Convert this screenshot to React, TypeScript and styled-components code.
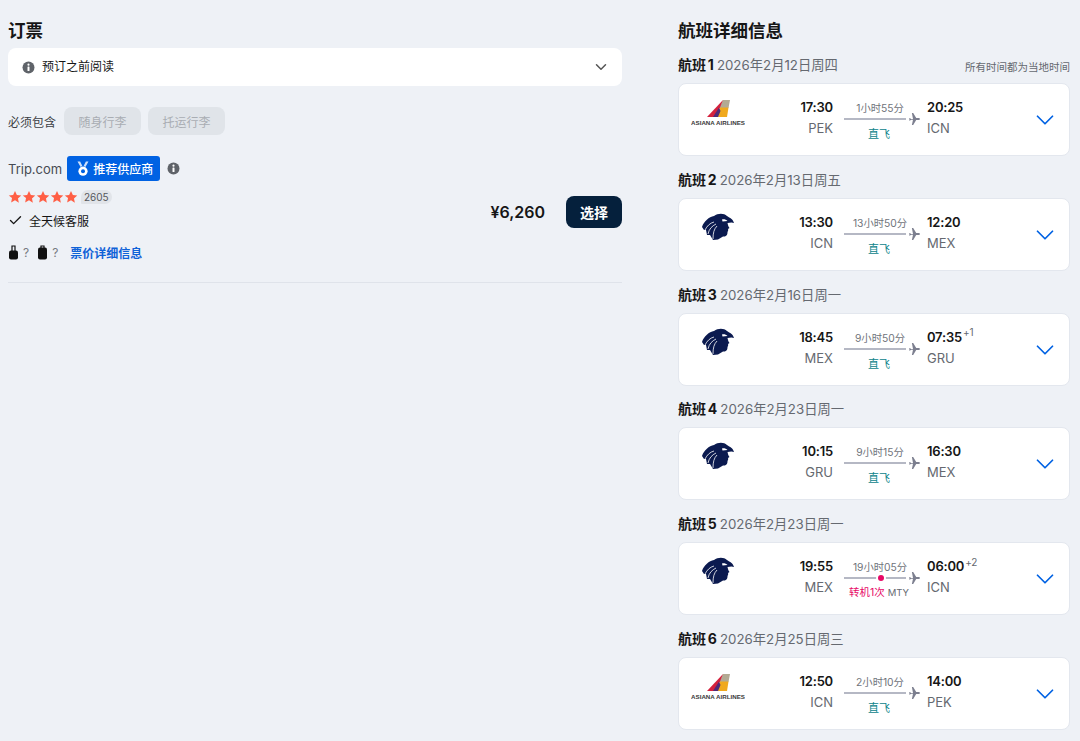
import React from "react";
import styled, { createGlobalStyle } from "styled-components";
import { ChevronDown, Check } from "lucide-react";

const GlobalStyle = createGlobalStyle`
  html, body {
    margin: 0;
    padding: 0;
    height: 741px;
    overflow: hidden;
    background: #eef1f6;
    font-family: Inter, "Noto Sans CJK SC", sans-serif;
    color: #161616;
  }
`;

const Page = styled.div`
  display: grid;
  grid-template-columns: 614px 392px;
  column-gap: 56px;
  padding: 20px 0 0 8px;
`;

const Title = styled.h2`
  margin: 0;
  height: 28px;
  font-size: 17.5px;
  line-height: 22px;
  font-weight: 700;
  color: #161616;
`;

const LeftColumn = styled.div`
  display: flex;
  flex-direction: column;
`;

const Notice = styled.div`
  display: flex;
  align-items: center;
  height: 38px;
  padding: 0 12px 0 14px;
  background: #fff;
  border-radius: 8px;
  font-size: 12px;
  line-height: 38px;
  color: #161616;
`;

const NoticeText = styled.span`
  flex: 1;
  margin-left: 7px;
`;

const Includes = styled.div`
  display: flex;
  align-items: center;
  gap: 8px;
  margin-top: 21px;
  font-size: 12px;
  color: #3c3f45;
`;

const Chip = styled.span`
  display: flex;
  align-items: center;
  justify-content: center;
  width: 77px;
  height: 28px;
  border-radius: 8px;
  background: #e0e4e9;
  color: #a9adb3;
  font-size: 12px;

  & + & {
    margin-left: -1px;
  }
`;

const Offer = styled.div`
  display: flex;
  align-items: center;
  justify-content: space-between;
  margin-top: 21px;
  padding-bottom: 20px;
  border-bottom: 1px solid #dfe3ea;
`;

const OfferInfo = styled.div`
  display: flex;
  flex-direction: column;
`;

const ProviderRow = styled.div`
  display: flex;
  align-items: center;
  height: 25px;
  font-size: 13px;
  color: #474b52;
`;

const Badge = styled.span`
  display: flex;
  align-items: center;
  gap: 3px;
  height: 25px;
  margin: 0 7px 0 5px;
  padding: 0 7px 0 9px;
  border-radius: 3px;
  background: #0062e3;
  color: #fff;
  font-size: 12px;
  font-weight: 500;
`;

const RatingRow = styled.div`
  display: flex;
  align-items: center;
  height: 20px;
  margin-top: 6px;
`;

const Stars = styled.div`
  display: flex;
  gap: 0;
  margin-right: 3px;
`;

const ReviewCount = styled.span`
  height: 14px;
  padding: 0 3px;
  line-height: 14px;
  border-radius: 7px 7px 7px 1px;
  background: #e1e4e9;
  font-size: 10px;
  color: #54575c;
`;

const ServiceRow = styled.div`
  display: flex;
  align-items: center;
  gap: 6px;
  height: 20px;
  margin-top: 3px;
  font-size: 12px;
  color: #161616;
`;

const BagRow = styled.div`
  display: flex;
  align-items: center;
  height: 20px;
  margin-top: 12px;
  font-size: 12px;
  color: #777b82;
`;

const BagMark = styled.span`
  margin: 0 8px 0 4px;
`;

const FareLink = styled.span`
  margin-left: 4px;
  font-size: 12px;
  font-weight: 700;
  color: #0f62d8;
`;

const PriceBox = styled.div`
  display: flex;
  align-items: center;
  gap: 21px;
  margin-top: 5px;
`;

const Price = styled.span`
  font-size: 16px;
  font-weight: 600;
  color: #161616;
`;

const SelectButton = styled.button`
  width: 56px;
  height: 32px;
  padding: 0;
  border: 0;
  border-radius: 8px;
  background: #05203c;
  color: #fff;
  font: 700 14px Inter, "Noto Sans CJK SC", sans-serif;
`;

const RightColumn = styled.div`
  display: flex;
  flex-direction: column;
`;

const Leg = styled.section`
  height: 114.75px;
`;

const LegHead = styled.div`
  display: flex;
  align-items: flex-end;
  justify-content: space-between;
  height: 35px;
  padding-bottom: 8px;
  box-sizing: border-box;
`;

const LegTitle = styled.div`
  font-size: 13.3px;
  line-height: 20px;
  color: #656970;
`;

const LegNumber = styled.strong`
  font-size: 14px;
  font-weight: 700;
  word-spacing: -1.5px;
  color: #161616;
  margin-right: 3px;
`;

const LocalNote = styled.span`
  font-size: 10.5px;
  line-height: 14px;
  color: #656970;
`;

const Card = styled.div`
  display: grid;
  grid-template-columns: 78px 76px 94px 1fr 48px;
  align-items: start;
  box-sizing: border-box;
  height: 73px;
  padding-top: 14px;
  background: #fff;
  border: 1px solid #e3e7ee;
  border-radius: 8px;
`;

const LogoBox = styled.div`
  display: flex;
  justify-content: center;
`;

const DepartCol = styled.div`
  display: flex;
  flex-direction: column;
  align-items: flex-end;
`;

const ArriveCol = styled.div`
  display: flex;
  flex-direction: column;
  align-items: flex-start;
`;

const Time = styled.span`
  font-size: 13px;
  line-height: 19px;
  font-weight: 600;
  letter-spacing: -0.2px;
  color: #161616;
`;

const DayOffset = styled.sup`
  margin-left: 1px;
  font-size: 10px;
  font-weight: 400;
  line-height: 0;
  color: #656970;
`;

const Airport = styled.span`
  margin-top: 2px;
  font-size: 13px;
  line-height: 18px;
  color: #656970;
`;

const RouteCol = styled.div`
  display: flex;
  flex-direction: column;
  align-items: center;
  width: 76px;
  margin-left: 11px;
`;

const Duration = styled.span`
  height: 16px;
  margin-top: 2px;
  padding-right: 4px;
  font-size: 10.3px;
  line-height: 16px;
  color: #6f737a;
`;

const LineRow = styled.div`
  display: flex;
  align-items: center;
  align-self: stretch;
  gap: 3px;
  height: 12px;
  margin-top: -3px;
`;

const Line = styled.div`
  position: relative;
  flex: 1;
  height: 2px;
  background: #b5b8c4;
`;

const StopDot = styled.span`
  position: absolute;
  left: 60%;
  top: -2px;
  width: 6px;
  height: 6px;
  margin-left: -3px;
  border-radius: 50%;
  background: #e70866;
  box-shadow: 0 0 0 2px #fff;
`;

const StopInfo = styled.span<{ $stop?: boolean }>`
  height: 16px;
  margin-top: 1px;
  padding-right: 6px;
  font-size: ${(p) => (p.$stop ? "10.5px" : "11px")};
  line-height: 16px;
  white-space: nowrap;
  color: ${(p) => (p.$stop ? "#e70866" : "#0c838a")};
`;

const StopPlace = styled.span`
  margin-left: 3px;
  font-size: 9.5px;
  color: #656970;
`;

const ChevronBox = styled.div`
  display: flex;
  justify-content: center;
  padding-top: 7px;
  color: #0062e3;
`;

const InfoDot = ({ size = 13, fill = "#5f6369" }: { size?: number; fill?: string }) => (
  <svg width={size} height={size} viewBox="0 0 13 13">
    <circle cx="6.5" cy="6.5" r="6" fill={fill} />
    <rect x="5.5" y="5.5" width="2" height="4.5" rx=".6" fill="#fff" />
    <circle cx="6.5" cy="3.7" r="1.1" fill="#fff" />
  </svg>
);

const Star = () => (
  <svg width="14" height="14" viewBox="0 0 24 24" fill="#ff5f45">
    <path d="M12 1.500l3.200 6.900 7.500.9-5.600 5.100 1.500 7.500L12 17.700l-6.600 3.700 1.500-7.500L1.300 9.300l7.500-.9z" />
  </svg>
);

const Medal = () => (
  <svg width="14" height="16" viewBox="0 0 14 16" fill="#fff">
    <path d="M1.500 0.500h2.600l2.200 4.200-1.700 1.400zM12.500 0.500H9.900L7.700 4.700l1.700 1.400z" opacity=".8" />
    <circle cx="7" cy="10.200" r="4.600" />
    <circle cx="7" cy="10.200" r="2" fill="#0062e3" />
  </svg>
);

const CabinBag = () => (
  <svg width="11" height="15" viewBox="0 0 11 15" fill="#111">
    <path d="M4 6V1h3v5" fill="none" stroke="#111" strokeWidth="1.200" />
    <rect x="1" y="5.500" width="9" height="9" rx="2" />
  </svg>
);

const CheckedBag = () => (
  <svg width="11" height="15" viewBox="0 0 11 15" fill="#111">
    <path d="M4 3V1h3v2" fill="none" stroke="#111" strokeWidth="1.200" />
    <rect x="1" y="2.500" width="9" height="12" rx="2" />
  </svg>
);

const PlaneIcon = () => (
  <svg width="11" height="12" viewBox="0 0 11 12" fill="#7c7f8f">
    <path d="M0 5.200h1.100l1 .8H4L2.900 0h1.300l3 5h2.300c1.900 0 1.900 2 0 2H7.200l-3 5H2.900L4 6.800H2.100l-1 .8H0L.5 6.400z" />
  </svg>
);

const AsianaLogo = () => (
  <svg width="54" height="30" viewBox="0 1 54 30">
    <path d="M32 3h7l-1.500 8H28z" fill="#b3aa93" />
    <path d="M29 10.500h8.500L36 20H25z" fill="#f0a91e" />
    <path d="M16 20L32 3l-3 7.500L23 20z" fill="#d4213d" />
    <path d="M22 20l6-9.500 1.500 3.500L27 20z" fill="#4d2a78" />
    <text x="27" y="28" textAnchor="middle" fontFamily="'Liberation Sans', sans-serif" fontSize="6.200" fontWeight="700" fill="#3a3a3a">
      ASIANA AIRLINES
    </text>
  </svg>
);

const AeromexicoLogo = () => (
  <svg width="34" height="27" viewBox="0 0 34 27">
    <path
      fill="#0b1a4f"
      d="M1 14C3 8 8 4 13 3c4-3 10-3 13 0 3 2 6 3 7 7-2-1-4-.5-6.500 0 .5 2 .5 3 2 5l-1.500 1c.5 1 0 2-.5 3 0 2-.5 5-4.500 4.500L17 26.500l-5 .5-3-5H6l-1-5H3z"
    />
    <path
      fill="none"
      stroke="#fff"
      strokeWidth="0.800"
      d="M13 9c-4 1-7 4-9 8M15 11c-4 2-7 5-8 10M16 13c-3 3-4 7-4 13"
    />
    <path fill="#fff" d="M21 6.500c2-.5 4 0 5.500 1.500l-5 .5z" />
  </svg>
);

type Flight = {
  num: number;
  date: string;
  airline: "asiana" | "aeromexico";
  dep: string;
  from: string;
  duration: string;
  arr: string;
  to: string;
  offset?: string;
  stop?: string;
};

const flights: Flight[] = [
  { num: 1, date: "2026年2月12日周四", airline: "asiana", dep: "17:30", from: "PEK", duration: "1小时55分", arr: "20:25", to: "ICN" },
  { num: 2, date: "2026年2月13日周五", airline: "aeromexico", dep: "13:30", from: "ICN", duration: "13小时50分", arr: "12:20", to: "MEX" },
  { num: 3, date: "2026年2月16日周一", airline: "aeromexico", dep: "18:45", from: "MEX", duration: "9小时50分", arr: "07:35", to: "GRU", offset: "+1" },
  { num: 4, date: "2026年2月23日周一", airline: "aeromexico", dep: "10:15", from: "GRU", duration: "9小时15分", arr: "16:30", to: "MEX" },
  { num: 5, date: "2026年2月23日周一", airline: "aeromexico", dep: "19:55", from: "MEX", duration: "19小时05分", arr: "06:00", to: "ICN", offset: "+2", stop: "MTY" },
  { num: 6, date: "2026年2月25日周三", airline: "asiana", dep: "12:50", from: "ICN", duration: "2小时10分", arr: "14:00", to: "PEK" },
];

const App: React.FC = () => {
  return (
    <Page>
      <GlobalStyle />
      <LeftColumn>
        <Title>订票</Title>
        <Notice>
          <InfoDot />
          <NoticeText>预订之前阅读</NoticeText>
          <ChevronDown size={18} color="#555" strokeWidth={2} />
        </Notice>
        <Includes>
          必须包含
          <Chip>随身行李</Chip>
          <Chip>托运行李</Chip>
        </Includes>
        <Offer>
          <OfferInfo>
            <ProviderRow>
              Trip.com
              <Badge>
                <Medal />
                推荐供应商
              </Badge>
              <InfoDot />
            </ProviderRow>
            <RatingRow>
              <Stars>
                {[0, 1, 2, 3, 4].map((i) => (
                  <Star key={i} />
                ))}
              </Stars>
              <ReviewCount>2605</ReviewCount>
            </RatingRow>
            <ServiceRow>
              <Check size={15} color="#161616" strokeWidth={2.2} />
              全天候客服
            </ServiceRow>
            <BagRow>
              <CabinBag />
              <BagMark>?</BagMark>
              <CheckedBag />
              <BagMark>?</BagMark>
              <FareLink>票价详细信息</FareLink>
            </BagRow>
          </OfferInfo>
          <PriceBox>
            <Price>¥6,260</Price>
            <SelectButton>选择</SelectButton>
          </PriceBox>
        </Offer>
      </LeftColumn>
      <RightColumn>
        <Title>航班详细信息</Title>
        {flights.map((f) => (
          <Leg key={f.num}>
            <LegHead>
              <LegTitle>
                <LegNumber>航班 {f.num}</LegNumber>
                {f.date}
              </LegTitle>
              {f.num === 1 && <LocalNote>所有时间都为当地时间</LocalNote>}
            </LegHead>
            <Card>
              <LogoBox>{f.airline === "asiana" ? <AsianaLogo /> : <AeromexicoLogo />}</LogoBox>
              <DepartCol>
                <Time>{f.dep}</Time>
                <Airport>{f.from}</Airport>
              </DepartCol>
              <RouteCol>
                <Duration>{f.duration}</Duration>
                <LineRow>
                  <Line>{f.stop && <StopDot />}</Line>
                  <PlaneIcon />
                </LineRow>
                <StopInfo $stop={!!f.stop}>
                  {f.stop ? "转机1次" : "直飞"}
                  {f.stop && <StopPlace>{f.stop}</StopPlace>}
                </StopInfo>
              </RouteCol>
              <ArriveCol>
                <Time>
                  {f.arr}
                  {f.offset && <DayOffset>{f.offset}</DayOffset>}
                </Time>
                <Airport>{f.to}</Airport>
              </ArriveCol>
              <ChevronBox>
                <ChevronDown size={30} strokeWidth={1.4} />
              </ChevronBox>
            </Card>
          </Leg>
        ))}
      </RightColumn>
    </Page>
  );
};

export default App;
